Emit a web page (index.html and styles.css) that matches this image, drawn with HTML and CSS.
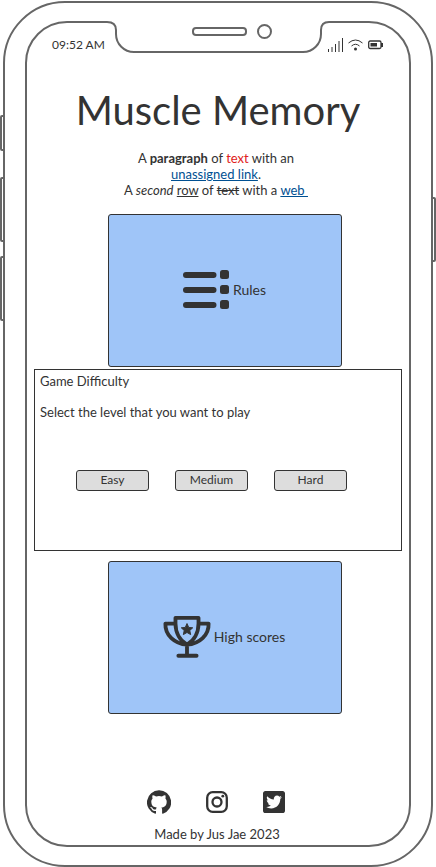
FILE: index.html
```html
<!DOCTYPE html>
<html lang="en">
<head>
<meta charset="utf-8">
<meta name="viewport" content="width=device-width, initial-scale=1">
<title>Muscle Memory</title>
<link rel="stylesheet" href="styles.css">
</head>
<body>
<div class="phone">
  <span class="key key-mute"></span>
  <span class="key key-up"></span>
  <span class="key key-down"></span>
  <span class="key key-power"></span>
  <div class="screen">
    <svg class="notch" width="222" height="34" viewBox="0 0 222 34" aria-hidden="true">
      <path class="notch-fill" d="M0 0H222V2C216 2 213 5 213 11C214 24 207 32 195 32H27C15 32 8 24 8 11C8 5 6 2 0 2Z"/>
      <path class="notch-line" d="M0 2C5 2 9 4 9 10V14C9 24 17 32 27 32H196C206 32 214 24 214 14V10C214 4 217 2 222 2"/>
    </svg>
    <svg class="speaker" width="82" height="18" viewBox="0 0 82 18" aria-hidden="true">
      <rect x="2" y="6" width="53" height="7" rx="3"/>
      <circle cx="73.500" cy="9.500" r="6.500"/>
    </svg>
    <header class="status">
      <span>09:52 AM</span>
      <span class="status-icons">
        <svg width="15" height="14" viewBox="0 0 15 14" aria-hidden="true"><path class="thin" d="M.5 11V14M4 9V14M7.500 6V14M11 3V14M14.500 0V14"/></svg>
        <svg width="15" height="12" viewBox="0 0 15 12" aria-hidden="true"><path class="thin" d="M.5 4Q7.500-2 14.500 4M3.500 7Q7.500 3.500 11.500 7"/><circle cx="7.500" cy="10" r="1.500"/></svg>
        <svg width="15" height="10" viewBox="0 0 15 10" aria-hidden="true"><rect class="case" x=".7" y="1" width="12.300" height="7.500" rx="1.500"/><path d="M2.500 3H9V6.500H2.500ZM13 3H15V7H13Z"/></svg>
      </span>
    </header>
    <main>
      <h1>Muscle Memory</h1>
      <p class="intro">A <b>paragraph</b> of <span class="red">text</span> with an<br>
        <a href="#link">unassigned link</a>.<br>
        A <i>second</i> <u>row</u> of <s>text</s> with a <a href="#web">web&nbsp;</a></p>
      <button class="card" type="button">
        <svg width="48" height="40" viewBox="0 0 48 40" aria-hidden="true"><path class="bars" d="M4 5H31.500M4 20H31.500M4 35H31.500"/><rect x="38" y="0" width="9" height="9" rx="2.500"/><rect x="38" y="15" width="9" height="9" rx="2.500"/><rect x="38" y="30" width="9" height="9" rx="2.500"/></svg>
        <span>Rules</span>
      </button>
      <section class="panel">
        <h2>Game Difficulty</h2>
        <p>Select the level that you want to play</p>
        <div class="levels">
          <button type="button">Easy</button>
          <button type="button">Medium</button>
          <button type="button">Hard</button>
        </div>
      </section>
      <button class="card" type="button">
        <svg width="48" height="44" viewBox="0 0 50 44" aria-hidden="true"><path class="cup" d="M13 2H37V8C37 18 32 26 25 30C18 26 13 18 13 8ZM13 8H2.500C2 20 12 29 25 30C38 29 48 20 47.500 8H37M25 30V41M16 41.500H35"/><path d="M25 8L26.800 12L31 12.400L27.900 15.200L28.800 19.500L25 17.300L21.200 19.500L22.100 15.200L19 12.400L23.200 12Z" stroke="#333" stroke-linejoin="round"/></svg>
        <span>High scores</span>
      </button>
    </main>
    <footer>
      <nav class="social">
        <a href="#github" aria-label="GitHub"><svg width="24" height="24" viewBox="0 0 24 24" aria-hidden="true"><path d="M12 .3a12 12 0 0 0-3.800 23.400c.6.100.800-.3.800-.6v-2.200c-3.300.7-4-1.400-4-1.400-.6-1.400-1.400-1.800-1.400-1.800-1-.7.100-.7.100-.7 1.200 0 1.900 1.200 1.900 1.200 1 1.800 2.800 1.300 3.500 1 0-.8.400-1.300.7-1.600-2.700-.3-5.500-1.300-5.500-6 0-1.200.5-2.300 1.300-3.100-.2-.4-.6-1.600 0-3.200 0 0 1-.3 3.400 1.200a11.500 11.500 0 0 1 6 0c2.300-1.500 3.300-1.200 3.300-1.200.6 1.600.200 2.800.1 3.200.8.800 1.300 1.900 1.300 3.200 0 4.600-2.800 5.600-5.500 5.900.5.400.9 1 .9 2.200v3.300c0 .3.100.7.800.6A12 12 0 0 0 12 .3"/></svg></a>
        <a href="#instagram" aria-label="Instagram"><svg width="22" height="22" viewBox="0 0 22 22" aria-hidden="true"><rect class="lens" x="1.200" y="1.200" width="19.600" height="19.600" rx="5.500"/><circle class="lens" cx="11" cy="11" r="4.500"/><circle cx="16.800" cy="5.200" r="1.400"/></svg></a>
        <a href="#twitter" aria-label="Twitter"><svg width="22" height="22" viewBox="0 0 448 448" aria-hidden="true"><path fill-rule="evenodd" d="M400 0H48C21.500 0 0 21.500 0 48v352c0 26.500 21.500 48 48 48h352c26.500 0 48-21.500 48-48V48c0-26.500-21.500-48-48-48zm-48.900 158.800c.2 2.800.2 5.700.2 8.500 0 86.700-66 186.600-186.600 186.600-37.200 0-71.700-10.800-100.700-29.400 5.300.6 10.400.8 15.800.8 30.700 0 58.900-10.400 81.400-28-28.800-.6-53-19.500-61.300-45.500 10.100 1.500 19.200 1.500 29.600-1.200-30-6.100-52.500-32.500-52.500-64.400v-.8c8.700 4.900 18.900 7.900 29.600 8.300a65.447 65.447 0 0 1-29.200-54.600c0-12.200 3.200-23.400 8.900-33.100 32.300 39.800 80.800 65.800 135.200 68.600-9.300-44.500 24-80.600 64-80.600 18.900 0 35.900 7.900 47.900 20.700 14.800-2.800 29-8.300 41.600-15.800-4.900 15.200-15.200 28-28.800 36.100 13.200-1.400 26-5.100 37.800-10.200-8.900 13.100-20.100 24.700-32.900 34z"/></svg></a>
      </nav>
      <p>Made by Jus Jae 2023</p>
    </footer>
  </div>
</div>
</body>
</html>
```
FILE: styles.css
```css
* {
  box-sizing: border-box;
}

body {
  margin: 0;
  background: #fff;
  color: #333;
  font: 13px/16px Lato, "Liberation Sans", sans-serif;
}

h1,
h2,
p {
  margin: 0;
  font-weight: 400;
}

svg {
  display: block;
  flex: none;
  fill: #333;
}

button {
  color: inherit;
  font: inherit;
  border: 1px solid #333;
  border-radius: 3px;
  padding: 0;
}

.phone {
  position: relative;
  display: flex;
  min-height: calc(100vh - 1px);
  margin: 1px 3px 0;
  padding: 18px 20px;
  border: 2px solid #666;
  border-radius: 62px;
}

/* Side keys lie on the outer edge of the case. */
.key {
  position: absolute;
  left: -5px;
  width: 5px;
  border: 2px solid #666;
  border-radius: 2px 0 0 2px;
}

.key-mute {
  top: 112px;
  height: 36px;
}

.key-up {
  top: 174px;
  height: 65px;
}

.key-down {
  top: 253px;
  height: 65px;
}

.key-power {
  top: 194px;
  right: -5px;
  left: auto;
  height: 65px;
  border-radius: 0 2px 2px 0;
}

.screen {
  position: relative;
  display: flex;
  flex: 1;
  flex-direction: column;
  border: 2px solid #666;
  border-radius: 42px;
}

.notch {
  position: absolute;
  top: -3px;
  left: calc(50% - 111px);
}

.notch-fill {
  fill: #fff;
}

.notch-line,
.speaker {
  fill: none;
  stroke: #666;
  stroke-width: 2;
}

.speaker {
  position: absolute;
  top: -1px;
  left: calc(50% - 27px);
}

.status {
  display: flex;
  justify-content: space-between;
  align-items: center;
  padding: 14px 26px 0 25px;
  font-size: 12px;
}

.status-icons {
  display: flex;
  align-items: center;
  gap: 5px;
}

.thin,
.case {
  fill: none;
  stroke: #333;
}

.case {
  stroke-width: 1.3;
}

main {
  display: flex;
  flex-direction: column;
  padding: 0 7px;
}

h1 {
  margin-top: 32px;
  font-size: 40px;
  line-height: 50px;
  text-align: center;
}

.intro {
  margin: 15px 4px 16px 0;
  text-align: center;
}

.intro a {
  color: #005092;
}

.red {
  color: #e02020;
}

.card {
  display: flex;
  justify-content: center;
  align-items: center;
  gap: 3px;
  height: 153px;
  margin: 0 60px 0 74px;
  padding: 0 2px 2px 0;
  background: #9fc5f8;
  font-size: 14px;
}

.bars {
  stroke: #333;
  stroke-width: 6;
  stroke-linecap: round;
}

.cup {
  fill: none;
  stroke: #333;
  stroke-width: 4;
  stroke-linecap: round;
  stroke-linejoin: round;
}

.panel {
  height: 182px;
  margin: 2px 0 10px;
  padding: 3px 5px;
  border: 1px solid #333;
}

.panel h2 {
  font-size: 13px;
  line-height: 16px;
}

.panel p {
  margin-top: 15px;
}

.levels {
  display: flex;
  justify-content: space-between;
  margin: 50px 49px 0 36px;
}

.levels button {
  width: 73px;
  height: 21px;
  padding-bottom: 2px;
  background: #ddd;
  font-size: 12px;
}

footer {
  margin-top: auto;
  padding-bottom: 3px;
  text-align: center;
}

footer p {
  margin-right: 2px;
}

.social {
  display: flex;
  justify-content: center;
  align-items: center;
  gap: 35px;
  margin: 0 4px 12px 0;
}

.lens {
  fill: none;
  stroke: #333;
  stroke-width: 2.3;
}
```
